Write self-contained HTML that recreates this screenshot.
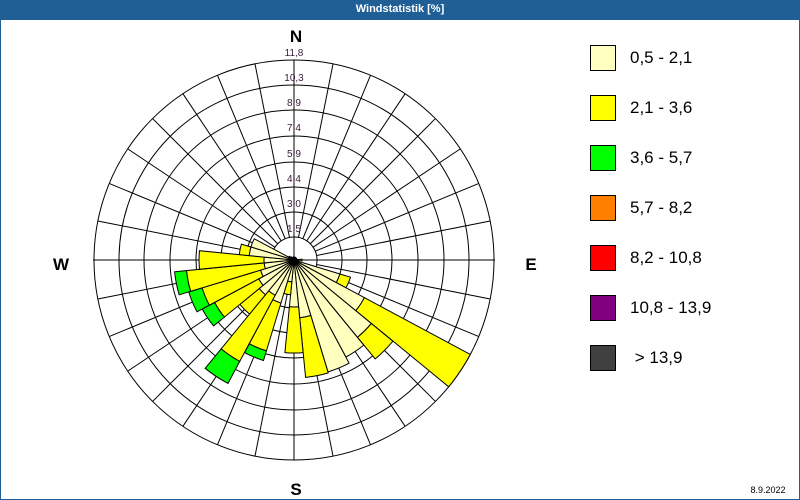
<!DOCTYPE html>
<html><head><meta charset="utf-8"><style>
html,body{margin:0;padding:0;background:#fff;}
body{width:800px;height:500px;position:relative;overflow:hidden;font-family:"Liberation Sans","DejaVu Sans",sans-serif;}
#frame{position:absolute;left:0;top:0;width:798px;height:498px;border:1px solid #1f5f96;}
#title{position:absolute;left:0;top:0;width:800px;height:20px;background:#1f5f96;color:#fff;font-size:11px;font-weight:bold;text-align:center;line-height:18px;}
.lg{position:absolute;left:590px;width:24px;height:24px;border:1px solid #000;}
.lt{position:absolute;left:630px;font-size:17px;color:#000;}
</style></head><body>
<div id="frame"></div>
<div id="title">Windstatistik [%]</div>
<svg id="s" width="800" height="500" style="position:absolute;left:0;top:0">
<g id="grid" fill="none" stroke="#000" stroke-width="1"></g><g id="bars"></g>
<g font-size="10" fill="#3a1a3a" text-anchor="middle" font-family="Liberation Sans, sans-serif">
<text x="294" y="56">11,8</text><text x="294" y="81">10,3</text><text x="294" y="106">8,9</text>
<text x="294" y="131">7,4</text><text x="294" y="157">5,9</text><text x="294" y="182">4,4</text>
<text x="294" y="207">3,0</text><text x="294" y="232">1,5</text></g>
<g font-size="17" font-weight="bold" text-anchor="middle" fill="#000">
<text x="296" y="42">N</text><text x="296" y="495">S</text><text x="61" y="270">W</text><text x="531" y="270">E</text></g>
<text x="768" y="493" font-size="9" text-anchor="middle">8.9.2022</text>
</svg>
<div class="lg" style="top:45px;background:#ffffc0"></div><div class="lt" style="top:48px">0,5 - 2,1</div>
<div class="lg" style="top:95px;background:#ffff00"></div><div class="lt" style="top:98px">2,1 - 3,6</div>
<div class="lg" style="top:145px;background:#00ff00"></div><div class="lt" style="top:148px">3,6 - 5,7</div>
<div class="lg" style="top:195px;background:#ff8000"></div><div class="lt" style="top:198px">5,7 - 8,2</div>
<div class="lg" style="top:245px;background:#ff0000"></div><div class="lt" style="top:248px">8,2 - 10,8</div>
<div class="lg" style="top:295px;background:#800080"></div><div class="lt" style="top:298px">10,8 - 13,9</div>
<div class="lg" style="top:345px;background:#404040"></div><div class="lt" style="top:348px">&nbsp;&gt; 13,9</div>
<script>
var cx=294,cy=260,NS="http://www.w3.org/2000/svg";
function el(p,t,a){var e=document.createElementNS(NS,t);for(var k in a)e.setAttribute(k,a[k]);p.appendChild(e);return e;}
var g=document.getElementById('grid'),b=document.getElementById('bars');
[23,48,73,98,124,150,175,200].forEach(function(r){el(g,'circle',{cx:cx,cy:cy,r:r});});
for(var a=0;a<360;a+=11.25){var t=a*Math.PI/180,s=Math.sin(t),c=Math.cos(t);
el(g,'line',{x1:cx+23*s,y1:cy-23*c,x2:cx+200*s,y2:cy-200*c});}
el(g,'line',{x1:93,y1:cy,x2:495,y2:cy});el(g,'line',{x1:cx,y1:60,x2:cx,y2:460});
function pt(r,d){var t=d*Math.PI/180;return (cx+r*Math.sin(t)).toFixed(1)+','+(cy-r*Math.cos(t)).toFixed(1);}
function wedge(d,r0,r1,col){var a0=d-5.6,a1=d+5.6;
var p='M'+pt(r0,a0)+'L'+pt(r1,a0)+'A'+r1+','+r1+' 0 0 1 '+pt(r1,a1)+'L'+pt(r0,a1)+(r0>0?'A'+r0+','+r0+' 0 0 0 '+pt(r0,a0):'')+'Z';
el(b,'path',{d:p,fill:col,stroke:'#000','stroke-width':1});}
var LY='#ffffc0',Y='#ffff00',G='#00ff00';
var data=[[90,[[3,LY],[8,Y]]],[101.25,[[4,LY]]],[112.5,[[48,LY],[59,Y]]],[123.75,[[80,LY],[200,Y]]],[135,[[100,LY],[128,Y]]],
[146.25,[[110,LY]]],[157.5,[[117,LY]]],[168.75,[[58,LY],[118,Y]]],[180,[[47,LY],[93,Y]]],[191.25,[[22,LY],[35,Y]]],
[202.5,[[45,LY],[95,Y],[105,G]]],[213.75,[[40,LY],[115,Y],[140,G]]],[225,[[45,LY],[70,Y]]],[236.25,[[40,LY],[90,Y],[104,G]]],
[247.5,[[35,LY],[96,Y],[110,G]]],[258.75,[[30,LY],[108,Y],[120,G]]],[270,[[30,LY],[95,Y]]],[281.25,[[45,LY],[55,Y]]],
[292.5,[[45,LY]]],[303.75,[[6,LY]]],[315,[[4,LY]]],[337.5,[[3,LY]]],[0,[[3,LY]]],[22.5,[[3,LY]]],[45,[[3,LY]]],[67.5,[[3,LY]]]];
data.forEach(function(d){var r0=0;d[1].forEach(function(s){wedge(d[0],r0,s[0],s[1]);r0=s[0];});});
</script>
</body></html>
